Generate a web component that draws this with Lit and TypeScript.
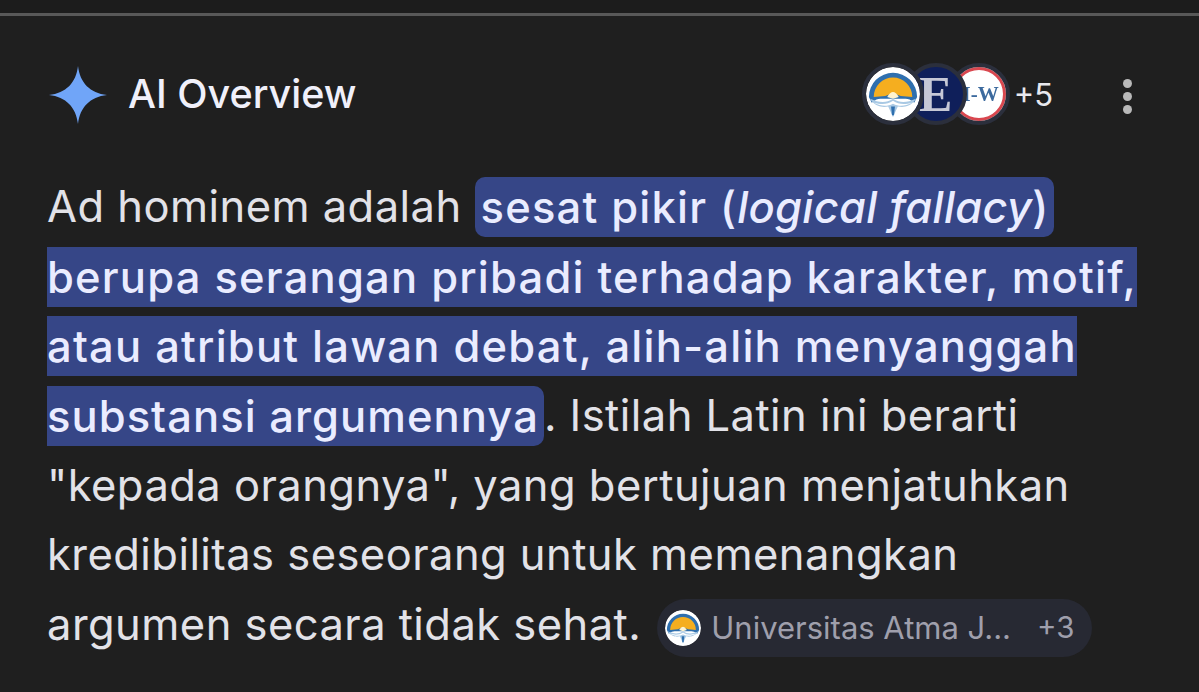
import { LitElement, html, css } from "lit";
import { customElement } from "lit/decorators.js";

const atma = () => html`<svg class="logo" viewBox="0 0 56 56">
  <circle cx="28" cy="28" r="28" fill="#fff"/>
  <path d="M3 31 A25 25 0 0 1 53 31 L50 37 C46 34 44 33 41 33 L15 33 C12 33 10 34 6 37 Z" fill="#2f6fae"/>
  <path d="M8 31 A20 20 0 0 1 48 31 L36 30 L28 27 L20 30 Z" fill="#f5ae1f"/>
  <path d="M22 31 Q28 21 34 31 L28 33 Z" fill="#fff3cf"/>
  <path d="M4 33 C14 37 20 38 28 33 C36 38 42 37 52 33 C46 42 38 42 33 41 C31 45 30 48 28 52 C26 48 25 45 23 41 C18 42 10 42 4 33 Z" fill="#a9c9e4"/>
  <path d="M8 37 C16 41 22 41 28 38 C34 41 40 41 48 37 C40 39 34 39 28 35 C22 39 16 39 8 37 Z" fill="#fff"/>
  <path d="M26 41 L30 41 L29 50 L27 50 Z" fill="#2f6fae"/>
</svg>`;

@customElement("app-root")
export class AppRoot extends LitElement {
  static styles = css`
    :host { display: block; width: 1199px; height: 692px; background: #1f1f1f; overflow: hidden; font-family: "Inter", "Liberation Sans", sans-serif; }
    .topbar { height: 13px; background: #1c1c1c; }
    .rule { height: 3px; background: #585858; }
    .panel { padding: 0 0 0 47px; display: flex; flex-direction: column; }
    .head { height: 158px; display: flex; align-items: center; }
    .title { display: flex; align-items: center; gap: 19px; flex: 1; }
    .title span { color: #f0f0fa; font: 500 39.5px/1 "Inter", sans-serif; }
    .sources { display: flex; align-items: center; margin-top: -2px; }
    .avatar { width: 62px; height: 62px; border-radius: 50%; border: 4px solid #2b2f3c; box-sizing: border-box; overflow: hidden; display: flex; align-items: center; justify-content: center; margin-left: -19px; font-family: "Liberation Serif", serif; font-weight: 700; filter: blur(.4px); }
    .avatar:first-child { margin-left: 0; z-index: 3; position: relative; }
    .avatar .logo { display: block; width: 54px; height: 54px; }
    .e { background: #0f1f5a; color: #c6c8d6; font-size: 50px; position: relative; z-index: 2; }
    .mw { background: #fff; color: #3c6a9e; font-size: 21px; box-shadow: inset 0 0 0 3px #d9474f; justify-content: flex-end; padding-right: 7px; }
    .count { color: #e8e8ee; font-size: 31px; margin-left: 4px; }
    .more { display: flex; flex-direction: column; gap: 4px; margin: 2px 67px 0 70px; }
    .more i { width: 9px; height: 9px; border-radius: 50%; background: #b9b9b9; display: block; }
    .body { display: flex; flex-direction: column; color: #e2e2e8; font: 400 43.5px/69.7px "Inter", sans-serif; letter-spacing: .45px; margin-top: -2px; white-space: nowrap; }
    .line { height: 69.7px; display: flex; align-items: center; white-space: pre; }
    .hl { background: #364687; color: #eaecff; height: 60px; line-height: 60px; display: block; font-weight: 500; letter-spacing: 1.2px; }
    .hl em { letter-spacing: .3px; }
    .hl.first { border-radius: 10px; margin-left: 13px; padding: 0 4px 0 6px; }
    .hl.last { border-radius: 0 10px 10px 0; padding-right: 5px; letter-spacing: 1.05px; }
    .chip { display: inline-flex; align-items: center; height: 58px; margin: 6px 0 0 16px; padding: 0 18px 0 8px; border-radius: 29px; background: #272933; color: #9f9fac; font: 400 31px/1 "Inter", sans-serif; letter-spacing: 0; }
    .chip .logo { width: 36px; height: 36px; border-radius: 50%; margin-right: 10px; }
    .chip .plus { margin-left: 26px; font-size: 29.5px; }
  `;
  render() {
    return html`
      <div class="topbar"></div>
      <div class="rule"></div>
      <div class="panel">
        <div class="head">
          <div class="title">
            <svg width="62" height="62" viewBox="0 0 62 62"><path d="M31 2 C33 19 43 29 60 31 C43 33 33 43 31 60 C29 43 19 33 2 31 C19 29 29 19 31 2 Z" fill="#70a5f8"/></svg>
            <span>AI Overview</span>
          </div>
          <div class="sources">
            <div class="avatar">${atma()}</div>
            <div class="avatar e">E</div>
            <div class="avatar mw">I-W</div>
            <div class="count">+5</div>
          </div>
          <div class="more"><i></i><i></i><i></i></div>
        </div>
        <div class="body">
          <div class="line">Ad hominem adalah<span class="hl first">sesat pikir (<em>logical fallacy</em>)</span></div>
          <div class="line"><span class="hl">berupa serangan pribadi terhadap karakter, motif,</span></div>
          <div class="line"><span class="hl">atau atribut lawan debat, alih-alih menyanggah</span></div>
          <div class="line"><span class="hl last">substansi argumennya</span>. Istilah Latin ini berarti</div>
          <div class="line">"kepada orangnya", yang bertujuan menjatuhkan</div>
          <div class="line">kredibilitas seseorang untuk memenangkan</div>
          <div class="line">argumen secara tidak sehat.<span class="chip">${atma()}Universitas Atma J...<span class="plus">+3</span></span></div>
        </div>
      </div>
    `;
  }
}
